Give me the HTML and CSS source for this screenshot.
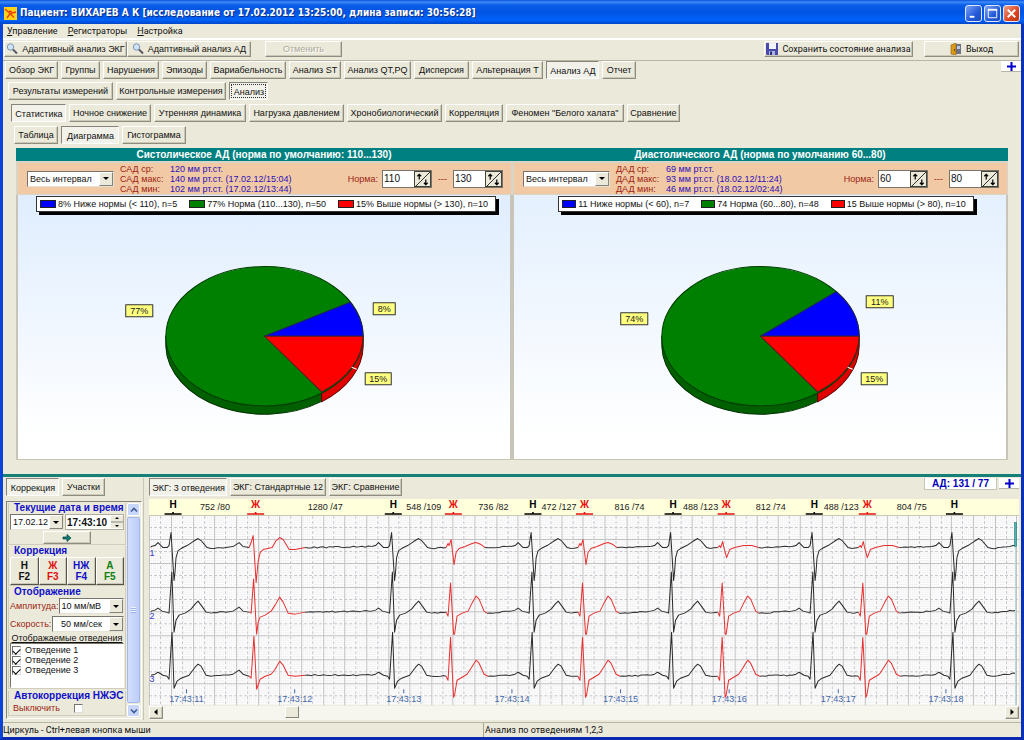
FILE: index.html
```html
<!DOCTYPE html>
<html lang="ru">
<head>
<meta charset="utf-8">
<title>Пациент: ВИХАРЕВ А К</title>
<link rel="stylesheet" href="styles.css">
</head>
<body>
<div class="window">
  <header class="titlebar">
    <svg class="app-icon" viewBox="0 0 13 13" aria-hidden="true"><rect width="13" height="13" fill="#ffd21a"/><path d="M1 2l5 4.500L12 5M6 6.500L3 11M6 6.500L10 10.500M5 4l3 1" stroke="#e8400c" stroke-width="1.400" fill="none"/></svg>
    <h1 class="title">Пациент: ВИХАРЕВ А К [исследование от 17.02.2012 13:25:00, длина записи: 30:56:28]</h1>
    <div class="window-buttons">
      <button class="wbtn" aria-label="Свернуть"><svg viewBox="0 0 16 16"><path d="M4 11.500h5" stroke="#fff" stroke-width="2"/></svg></button>
      <button class="wbtn" aria-label="Развернуть"><svg viewBox="0 0 16 16"><path d="M3.500 4v8.500h9V4" stroke="#fff" fill="none"/><path d="M3 4h10" stroke="#fff" stroke-width="2"/></svg></button>
      <button class="wbtn wbtn-close" aria-label="Закрыть"><svg viewBox="0 0 16 16"><path d="M4 4l8 8M12 4l-8 8" stroke="#fff" stroke-width="2"/></svg></button>
    </div>
  </header>

  <nav class="menubar">
    <a href="#"><u>У</u>правление</a>
    <a href="#"><u>Р</u>егистраторы</a>
    <a href="#"><u>Н</u>астройка</a>
  </nav>

  <div class="toolbar">
    <button class="btn tool-ecg"><svg class="icon" viewBox="0 0 12 12"><circle cx="4.500" cy="4" r="3.200" fill="#cfe4fa" stroke="#8095b5"/><path d="M7 6.500l4 4" stroke="#5d5a66" stroke-width="2"/></svg>Адаптивный анализ ЭКГ</button>
    <button class="btn tool-bp"><svg class="icon" viewBox="0 0 12 12"><circle cx="4.500" cy="4" r="3.200" fill="#cfe4fa" stroke="#8095b5"/><path d="M7 6.500l4 4" stroke="#5d5a66" stroke-width="2"/></svg>Адаптивный анализ АД</button>
    <button class="btn tool-undo" disabled>Отменить</button>
    <button class="btn tool-save ui-text"><svg class="icon" viewBox="0 0 12 12"><path d="M0 0h12v12H1L0 11z" fill="#4a4aa8"/><path d="M3 0h7v6H3z" fill="#f2f4fc"/><path d="M3 8h6v4H3z" fill="#a9b4dc"/><path d="M4 8.500h2V12H4z" fill="#32327c"/></svg>Сохранить состояние анализа</button>
    <button class="btn tool-exit ui-text"><svg class="icon" viewBox="0 0 12 12"><path d="M5 1h6v10H5z" fill="#6d7387"/><path d="M7 3h3v3H7z" fill="#b9cce8"/><path d="M1 2l5-2v12l-5-1z" fill="#dc9a18" stroke="#8c5f0c" stroke-width=".6"/><path d="M4 6h1v2H4z" fill="#704808"/></svg>Выход</button>
  </div>

  <main class="analysis">
    <div class="tab-line">
      <div class="tabs tabs-main">
        <button class="btn">Обзор ЭКГ</button><button class="btn">Группы</button><button class="btn">Нарушения</button><button class="btn">Эпизоды</button><button class="btn">Вариабельность</button><button class="btn">Анализ ST</button><button class="btn">Анализ QT,PQ</button><button class="btn">Дисперсия</button><button class="btn">Альтернация T</button><button class="btn active">Анализ АД</button><button class="btn">Отчет</button>
      </div>
      <button class="plus" aria-label="Добавить"><svg viewBox="0 0 9 9"><path d="M4.500 0v9M0 4.500h9" stroke="#0000c8" stroke-width="2"/></svg></button>
    </div>
    <div class="tabs tabs-measure">
      <button class="btn">Результаты измерений</button><button class="btn">Контрольные измерения</button><button class="btn active focused">Анализ</button>
    </div>
    <div class="tabs tabs-kind">
      <button class="btn active">Статистика</button><button class="btn">Ночное снижение</button><button class="btn">Утренняя динамика</button><button class="btn">Нагрузка давлением</button><button class="btn">Хронобиологический</button><button class="btn">Корреляция</button><button class="btn">Феномен "Белого халата"</button><button class="btn">Сравнение</button>
    </div>
    <div class="tabs tabs-view">
      <button class="btn">Таблица</button><button class="btn active">Диаграмма</button><button class="btn">Гистограмма</button>
    </div>

    <div class="panels">
      <section class="panel">
        <h2 class="panel-title">Систолическое АД (норма по умолчанию: 110...130)</h2>
        <div class="params">
          <span class="combo"><select aria-label="Интервал САД"><option>Весь интервал</option></select><i class="drop"></i></span>
          <dl class="stats">
            <dt>САД ср:</dt><dd>120 мм рт.ст.</dd>
            <dt>САД макс:</dt><dd>140 мм рт.ст. (17.02.12/15:04)</dd>
            <dt>САД мин:</dt><dd>102 мм рт.ст. (17.02.12/13:44)</dd>
          </dl>
          <div class="norm">
            <label for="sys-lo">Норма:</label>
            <span class="spin"><input id="sys-lo" value="110"><button aria-label="Изменить"><svg viewBox="0 0 16 16"><path d="M0 16L16 0" stroke="#222"/><path d="M4.500 2v6M2.500 4.500l2-2 2 2M11.500 8v6M9.500 11.500l2 2 2-2" stroke="#000" stroke-width="1.300" fill="none"/></svg></button></span>
            <span>---</span>
            <span class="spin"><input aria-label="Верхняя граница САД" value="130"><button aria-label="Изменить"><svg viewBox="0 0 16 16"><path d="M0 16L16 0" stroke="#222"/><path d="M4.500 2v6M2.500 4.500l2-2 2 2M11.500 8v6M9.500 11.500l2 2 2-2" stroke="#000" stroke-width="1.300" fill="none"/></svg></button></span>
          </div>
        </div>
        <div class="chart">
          <ul class="legend">
            <li><i class="key blue"></i>8% Ниже нормы (&lt; 110), n=5</li>
            <li><i class="key green"></i>77% Норма (110...130), n=50</li>
            <li><i class="key red"></i>15% Выше нормы (&gt; 130), n=10</li>
          </ul>
          <svg class="pie" viewBox="18 214 491 245">
            <path d="M165.500 336v10A98.500 69.500 0 0 0 321 401V391z" fill="#006000" stroke="#003000"/>
            <path d="M321 391v10.500A98.500 69.500 0 0 0 362.500 346V336z" fill="#e00000" stroke="#600000"/>
            <ellipse cx="264" cy="336" rx="98.500" ry="69.500" fill="#008000" stroke="#003c00"/>
            <path d="M264 336h98.500A98.500 69.500 0 0 0 349.500 302z" fill="#00f" stroke="#202060"/>
            <path d="M264 336h98.500A98.500 69.500 0 0 1 321 391.500z" fill="#f00" stroke="#502020"/>
            <path d="M351 367l5 2" stroke="#fff"/>
            <g class="marks"><path d="M125.500 304.500h27v12h-27zM372.500 302.500h22v12h-22zM364.500 372.500h26v12h-26z"/><text x="139" y="314">77%</text><text x="383.500" y="312">8%</text><text x="377.500" y="382">15%</text></g>
          </svg>
        </div>
      </section>

      <section class="panel">
        <h2 class="panel-title">Диастолического АД (норма по умолчанию 60...80)</h2>
        <div class="params">
          <span class="combo"><select aria-label="Интервал ДАД"><option>Весь интервал</option></select><i class="drop"></i></span>
          <dl class="stats">
            <dt>ДАД ср:</dt><dd>69 мм рт.ст.</dd>
            <dt>ДАД макс:</dt><dd>93 мм рт.ст. (18.02.12/11:24)</dd>
            <dt>ДАД мин:</dt><dd>46 мм рт.ст. (18.02.12/02:44)</dd>
          </dl>
          <div class="norm">
            <label for="dia-lo">Норма:</label>
            <span class="spin"><input id="dia-lo" value="60"><button aria-label="Изменить"><svg viewBox="0 0 16 16"><path d="M0 16L16 0" stroke="#222"/><path d="M4.500 2v6M2.500 4.500l2-2 2 2M11.500 8v6M9.500 11.500l2 2 2-2" stroke="#000" stroke-width="1.300" fill="none"/></svg></button></span>
            <span>---</span>
            <span class="spin"><input aria-label="Верхняя граница ДАД" value="80"><button aria-label="Изменить"><svg viewBox="0 0 16 16"><path d="M0 16L16 0" stroke="#222"/><path d="M4.500 2v6M2.500 4.500l2-2 2 2M11.500 8v6M9.500 11.500l2 2 2-2" stroke="#000" stroke-width="1.300" fill="none"/></svg></button></span>
          </div>
        </div>
        <div class="chart chart-dia">
          <ul class="legend">
            <li><i class="key blue"></i>11 Ниже нормы (&lt; 60), n=7</li>
            <li><i class="key green"></i>74 Норма (60...80), n=48</li>
            <li><i class="key red"></i>15 Выше нормы (&gt; 80), n=10</li>
          </ul>
          <svg class="pie" viewBox="514 214 491 245">
            <path d="M661.500 336v10A98.500 69.500 0 0 0 817 401V391z" fill="#006000" stroke="#003000"/>
            <path d="M817 391v10.500A98.500 69.500 0 0 0 858.500 346V336z" fill="#e00000" stroke="#600000"/>
            <ellipse cx="760" cy="336" rx="98.500" ry="69.500" fill="#008000" stroke="#003c00"/>
            <path d="M760 336h98.500A98.500 69.500 0 0 0 835.500 291.500z" fill="#00f" stroke="#202060"/>
            <path d="M760 336h98.500A98.500 69.500 0 0 1 817 391.500z" fill="#f00" stroke="#502020"/>
            <path d="M847 367l5 2" stroke="#fff"/>
            <g class="marks"><path d="M620.500 312.500h27v12h-27zM865.500 295.500h27v12h-27zM860.500 372.500h26v12h-26z"/><text x="634" y="322">74%</text><text x="879" y="305">11%</text><text x="873.500" y="382">15%</text></g>
          </svg>
        </div>
      </section>
    </div>
  </main>

  <div class="lower">
    <aside class="side">
      <div class="tabs tabs-side"><button class="btn active">Коррекция</button><button class="btn">Участки</button></div>
      <div class="side-box">
        <div class="side-scroll">
          <section class="group group-time">
            <h3>Текущие дата и время</h3>
            <div class="row">
              <span class="combo date"><input aria-label="Дата" value="17.02.12"><i class="drop"></i></span>
              <span class="time"><input aria-label="Время" value="17:43:10"><svg viewBox="0 0 12 12"><path d="M0 6h12" stroke="#888"/><path d="M6 1l2 2H4zM6 11l2-2H4z"/></svg></span>
            </div>
            <button class="btn go" aria-label="Перейти"><svg viewBox="0 0 10 8"><path d="M1 3h4V.500L9 4 5 7.500V5H1z" fill="#0a8078" stroke="#043c38" stroke-width=".7"/></svg></button>
          </section>
          <section class="group group-fix">
            <h3>Коррекция</h3>
            <div class="fix">
              <button class="btn">Н<br>F2</button><button class="btn c-red">Ж<br>F3</button><button class="btn c-blue">НЖ<br>F4</button><button class="btn c-green">А<br>F5</button>
            </div>
          </section>
          <section class="group group-view">
            <h3>Отображение</h3>
            <div class="field"><label for="amp">Амплитуда:</label><span class="combo amp"><select id="amp"><option>10 мм/мВ</option></select><i class="drop"></i></span></div>
            <div class="field"><label for="speed">Скорость:</label><span class="combo speed"><select id="speed"><option>50 мм/сек</option></select><i class="drop"></i></span></div>
            <p class="caption">Отображаемые отведения</p>
            <div class="leads">
              <label><input type="checkbox" checked>Отведение 1</label>
              <label><input type="checkbox" checked>Отведение 2</label>
              <label><input type="checkbox" checked>Отведение 3</label>
            </div>
          </section>
          <section class="group group-auto">
            <h3>Автокоррекция НЖЭС</h3>
            <label class="off">Выключить<input type="checkbox"></label>
          </section>
        </div>
        <div class="vscroll">
          <button aria-label="Вверх"><svg viewBox="0 0 8 8"><path d="M1 5.500l3-3 3 3" fill="none" stroke="#3c5a96" stroke-width="1.600"/></svg></button>
          <div class="vthumb"><i></i></div>
          <button aria-label="Вниз"><svg viewBox="0 0 8 8"><path d="M1 2.500l3 3 3-3" fill="none" stroke="#3c5a96" stroke-width="1.600"/></svg></button>
        </div>
      </div>
    </aside>

    <section class="ecg">
      <div class="tab-line">
        <div class="tabs tabs-ecg"><button class="btn active">ЭКГ: 3 отведения</button><button class="btn">ЭКГ: Стандартные 12</button><button class="btn">ЭКГ: Сравнение</button></div>
        <output class="bp">АД: 131 / 77</output>
        <button class="plus" aria-label="Добавить"><svg viewBox="0 0 9 9"><path d="M4.500 0v9M0 4.500h9" stroke="#0000c8" stroke-width="2"/></svg></button>
      </div>
      <svg class="strip" id="strip" viewBox="149 500 869 206"></svg>
      <div class="hscroll">
        <button class="btn" aria-label="Влево"><svg viewBox="0 0 8 8"><path d="M5.500 1v6L2 4z"/></svg></button>
        <div class="htrack"><i class="hthumb"></i></div>
        <button class="btn" aria-label="Вправо"><svg viewBox="0 0 8 8"><path d="M2.500 1v6L6 4z"/></svg></button>
      </div>
    </section>
  </div>

  <footer class="status">
    <span>Циркуль - Ctrl+левая кнопка мыши</span>
    <span>Анализ по отведениям 1,2,3</span>
  </footer>
</div>
<script src="ecg.js"></script>
</body>
</html>
```
FILE: styles.css
```css
* { box-sizing: border-box; }

body {
  margin: 0;
  font: 9px/10px "Liberation Sans", Arial, sans-serif;
  color: #111;
}

button, input, select { font: inherit; color: inherit; margin: 0; padding: 0; border-radius: 0; }
svg { display: block; }
h1, h2, h3, p, dl, dd, ul { margin: 0; padding: 0; }

.window {
  display: flex;
  flex-direction: column;
  min-height: 100vh;
  background: #ebe9da;
  border: solid #0a44d8;
  border-width: 0 3px 3px;
  border-right-color: #0831b8;
  border-bottom-color: #0a28b0;
}

/* Title bar */
.titlebar {
  display: flex;
  align-items: center;
  gap: 3px;
  height: 24px;
  margin: 0 -3px;
  padding: 2px 4px 0;
  background: linear-gradient(#0a50d8 0, #3c8cf8 2px, #0a5ce8 5px, #0054e3 12px, #0062fa 20px, #0046c8 100%);
}
.app-icon { width: 13px; height: 13px; }
.title {
  flex: 1;
  font: bold 10px/16px "DejaVu Sans Condensed", "DejaVu Sans", sans-serif;
  color: #fff;
  text-shadow: 1px 1px 0 #0a2c80;
}
.window-buttons { display: flex; gap: 2px; }
.wbtn {
  width: 17px;
  height: 17px;
  border: 1px solid #dfe8fa;
  border-radius: 3px;
  background: linear-gradient(135deg, #7ba4f4, #2258d8 60%, #1c4cc0);
}
.wbtn-close { background: linear-gradient(135deg, #f0a088, #dc4420 60%, #c03810); }

/* Menu and toolbar */
.menubar {
  display: flex;
  gap: 10px;
  height: 15px;
  padding: 2px 4px 0;
  font-family: Roboto, sans-serif;
  border-bottom: 1px solid #fff;
}
.menubar a { color: #111; text-decoration: none; }
.ui-text { font-family: Roboto, sans-serif; }
.toolbar {
  display: flex;
  height: 22px;
  padding: 1px 0 3px 1px;
  border-top: 1px solid #fff;
  border-bottom: 1px solid #b8b5a4;
}
.btn {
  display: flex;
  align-items: center;
  justify-content: center;
  white-space: nowrap;
  background: #ebe9da;
  border: 1px solid;
  border-color: #fff #8f8d80 #8f8d80 #fff;
  box-shadow: inset -1px -1px 0 #cbc8b8;
}
.btn:disabled { color: #aca899; text-shadow: 1px 1px 0 #fff; }
.btn.active {
  background: #f3f2ea;
  border-color: #86847a #fff #fff #86847a;
  box-shadow: none;
  padding: 1px 0 0 1px;
}
.btn.focused { outline: 1px dotted #333; outline-offset: -3px; }
.icon { width: 12px; height: 12px; margin-right: 4px; }
.tool-ecg { width: 123px; }
.tool-bp { width: 124px; }
.tool-undo { width: 77px; margin-left: 14px; }
.tool-save { width: 149px; margin-left: auto; }
.tool-exit { width: 95px; margin: 0 2px 0 11px; }

/* Tabs */
.tab-line { display: flex; align-items: flex-start; }
.tabs { display: grid; gap: 3px; grid-auto-rows: 18px; }
.analysis { padding-bottom: 14px; }
.tabs-main { grid-template-columns: 53px 39px 56px 45px 76px 52px 67px 55px 71px 53px 34px; margin-left: 2px; }
.tabs-measure { grid-template-columns: 105px 110px 39px; margin: 3px 0 0 5px; }
.tabs-kind { grid-template-columns: 55px 82px 92px 95px 95px 58px 118px 53px; margin: 4px 0 0 8px; }
.tabs-view { grid-template-columns: 44px 58px 64px; margin: 4px 0 0 11px; }
.plus {
  display: grid;
  place-items: center;
  width: 20px;
  height: 11px;
  margin-left: auto;
  background: #fff;
  border: 0;
  border-bottom: 1px solid #b8b5a4;
}
.plus svg { width: 9px; height: 9px; }

/* Pressure panels */
.panels {
  display: grid;
  grid-template-columns: 1fr 1fr;
  margin: 4px 13px 0;
  background: #008080;
}
.panel { display: flex; flex-direction: column; min-width: 0; }
.panel-title {
  font-size: 10px;
  line-height: 13px;
  text-align: center;
  color: #fff;
}
.params {
  display: flex;
  align-items: center;
  height: 34px;
  padding: 0 8px 0 9px;
  background: #f2c9a5;
  border: 1px solid #d8d5c8;
  border-width: 2px 1px 1px 2px;
}
.combo {
  display: grid;
  grid-template-columns: 1fr 14px;
  height: 16px;
  background: #fff;
  border: 1px solid;
  border-color: #77756a #e6e3d4 #e6e3d4 #77756a;
}
.combo select, .combo input {
  grid-area: 1 / 1 / 2 / 3;
  min-width: 0;
  width: 100%;
  padding-left: 2px;
  appearance: none;
  background: none;
  border: 0;
}
.drop {
  grid-area: 1 / 2;
  display: grid;
  place-items: center;
  pointer-events: none;
  background: #ebe9da;
  border: 1px solid;
  border-color: #fff #86847a #86847a #fff;
}
.drop::after {
  content: "";
  border: solid transparent;
  border-width: 3px 3px 0;
  border-top-color: #000;
}
.params .combo { width: 87px; }
.stats {
  display: grid;
  grid-template-columns: 50px auto;
  line-height: 10px;
  margin-left: 6px;
  white-space: nowrap;
}
.stats dt { color: #9c2410; }
.stats dd { color: #2a10b8; }
.norm { display: flex; align-items: center; gap: 4px; margin-left: auto; color: #9c2410; }
.norm > span:not(.spin) { width: 13px; text-align: center; }
.spin { display: flex; height: 18px; width: 50px; background: #fff; border: 1px solid #77756a; color: #111; }
.spin input { flex: 1; width: 10px; border: 0; background: none; font-size: 10px; padding-left: 1px; }
.spin button { width: 17px; background: #ebe9da; border: 1px solid #44423a; }
.chart {
  display: flex;
  flex-direction: column;
  align-items: center;
  gap: 2px;
  padding-top: 1px;
  background: linear-gradient(#dfedfe, #fff 92%);
  border: 1px solid #c8c5b8;
  border-width: 0 2px 1px 2px;
}
.chart-dia { background: linear-gradient(#e4f0fe, #fff 92%); }
.legend {
  display: flex;
  gap: 12px;
  list-style: none;
  padding: 1px 7px 1px 3px;
  margin-left: 4px;
  background: #fff;
  border: 1px solid #333;
  box-shadow: 3px 3px 0 #000;
  white-space: nowrap;
}
.chart-dia .legend { margin-left: 12px; }
.legend li { display: flex; align-items: center; gap: 2px; line-height: 12px; }
.key { width: 16px; height: 8px; border: 1px solid #222; }
.chart-dia .key { width: 14px; }
.blue { background: #00f; }
.green { background: #008000; }
.red { background: #f00; }
.pie { width: 100%; height: auto; stroke-linejoin: round; }
.marks path { fill: #ffff80; stroke: #333; }
.marks text { font-size: 9px; text-anchor: middle; fill: #222; }

/* Lower half */
.lower {
  flex: 1;
  display: grid;
  grid-template-columns: 141px 1fr;
  gap: 4px;
  padding: 1px 2px 2px 0;
  border-top: 3px solid #148078;
}
.side { display: flex; flex-direction: column; min-width: 0; padding: 0 0 0 2px; border-right: 1px solid #c8c5b4; }
.tabs-side { grid-template-columns: 53px 43px; margin-left: 1px; }
.side-box {
  flex: 1;
  display: grid;
  grid-template-columns: 1fr 13px;
  gap: 1px;
  margin: 5px 1px 1px;
  padding: 1px;
  border: 1px solid;
  border-color: #86847a #fff #fff #86847a;
}
.side-scroll { display: flex; flex-direction: column; gap: 1px; min-width: 0; }
.group { border: 1px solid #d0cdbc; border-top: 0; padding: 0 1px; }
.group h3 {
  display: flex;
  font-size: 10px;
  line-height: 10px;
  color: #1010c8;
  white-space: nowrap;
}
.group h3::before { content: ""; width: 4px; }
.group-time h3, .group-fix h3 { padding-bottom: 1px; }
.row { display: flex; justify-content: space-between; }
.date { width: 54px; }
.time { display: flex; align-items: center; width: 59px; height: 16px; background: #fff; border: 1px solid #b0ad9c; }
.time input { flex: 1; width: 10px; border: 0; padding-left: 1px; background: none; font-weight: bold; font-size: 10px; }
.time svg { width: 12px; height: 12px; background: #ebe9da; }
.go { width: 48px; height: 13px; margin: 1px auto 0; }
.go svg { width: 10px; height: 8px; }
.fix { display: grid; grid-template-columns: repeat(4, 1fr); height: 28px; }
.fix .btn { font-weight: bold; font-size: 10px; line-height: 11px; border-color: #fff #55534a #55534a #fff; }
.c-red { color: #e01010; }
.c-blue { color: #1010c8; }
.c-green { color: #108010; }
.field { display: flex; align-items: center; justify-content: space-between; height: 18px; color: #9c2410; white-space: nowrap; }
.field .combo { color: #111; }
.amp { width: 66px; }
.speed { width: 72px; }
.speed select { padding-left: 8px; }
.caption { text-decoration: underline; text-align: center; line-height: 10px; white-space: nowrap; }
.leads {
  display: flex;
  flex-direction: column;
  height: 45px;
  padding: 1px;
  background: #fff;
  border: 1px solid;
  border-color: #77756a #fff #fff #77756a;
}
.leads label { display: flex; align-items: center; gap: 4px; height: 10px; }
input[type="checkbox"] {
  appearance: none;
  display: grid;
  place-items: center;
  width: 9px;
  height: 9px;
  background: #fff;
  border: 1px solid;
  border-color: #77756a #ddd #ddd #77756a;
}
input[type="checkbox"]:checked::after {
  content: "";
  width: 6px;
  height: 4px;
  border: solid #000;
  border-width: 0 0 1px 1px;
  rotate: -45deg;
}
.group-auto { margin-top: 1px; }
.off { display: flex; align-items: center; gap: 14px; padding-left: 3px; height: 14px; color: #9c2410; }
.vscroll { display: flex; flex-direction: column; gap: 1px; }
.vscroll button {
  display: grid;
  place-items: center;
  height: 13px;
  background: #c8d6fa;
  border: 1px solid #fff;
  border-radius: 2px;
}
.vscroll svg { width: 8px; height: 8px; }
.vthumb {
  flex: 1;
  display: grid;
  place-items: center;
  background: linear-gradient(90deg, #d2defe, #bccdf8);
  border: 1px solid #a4b8ea;
  border-radius: 2px;
}
.vthumb i { width: 5px; height: 6px; background: repeating-linear-gradient(#eef3ff 0 1px, #9eb4e8 1px 2px); }

/* ECG */
.ecg { min-width: 0; padding-left: 1px; }
.tabs-ecg { grid-template-columns: 78px 96px 73px; }
.bp {
  width: 73px;
  margin-left: auto;
  text-align: center;
  font-weight: bold;
  font-size: 10px;
  line-height: 11px;
  color: #0000b8;
  background: #fff;
  border: 1px solid #c8c5b4;
  border-top: 0;
}
.bp + .plus { margin-left: 2px; }
.strip { width: 100%; height: auto; margin-top: 3px; }
.strip text { font-size: 9px; text-anchor: middle; fill: #222; }
.strip .beat { font-size: 10px; font-weight: bold; }
.strip .time-mark { fill: #4468a8; }
.strip .lead-no { fill: #3838c8; }
.strip path { fill: none; }
.hscroll { display: flex; height: 14px; background: #f6f5ee; }
.hscroll .btn { width: 14px; height: 13px; }
.hscroll svg { width: 8px; height: 8px; }
.htrack { flex: 1; padding-left: 14%; }
.hthumb {
  display: block;
  width: 14px;
  height: 12px;
  background: #ebe9da;
  border: 1px solid;
  border-color: #fff #86847a #86847a #fff;
}

.status {
  display: grid;
  grid-template-columns: 479px 1fr;
  gap: 1px;
  height: 15px;
  border-top: 1px solid #b8b5a4;
  font-family: Roboto, sans-serif;
  line-height: 14px;
}
.status span + span { border-left: 1px solid #a8a594; padding-left: 1px; }
```
FILE: ecg.js
```js
const svg = document.getElementById('strip');
const out = [];
const line = (d, stroke, extra = '') => out.push(`<path d="${d}" stroke="${stroke}" ${extra}/>`);
const text = (x, y, s, cls = '', fill = '') =>
  out.push(`<text x="${x}" y="${y}" class="${cls}" ${fill ? `style="fill:${fill}"` : ''}>${s}</text>`);

// Paper
out.push('<rect x="149" y="500" width="869" height="17" fill="#ffffdc"/>');
out.push('<rect x="149" y="517" width="869" height="189" fill="#fefefe"/>');
let fine = '', dash = '', solid = '';
for (let i = -10; i * 2.165 + 171 < 1018; i++) {
  const x = (171 + i * 2.165).toFixed(1);
  if (i % 10 === 0) solid += `M${Math.round(x) + 0.5} 517V706`;
  else if (i % 5 === 0) dash += `M${Math.round(x) + 0.5} 517V706`;
  else fine += `M${x} 517V706`;
}
for (let i = -9; i * 2.4 + 540 < 706; i++) {
  const y = (540 + i * 2.4).toFixed(1);
  if (i % 10 === 0) solid += `M149 ${Math.round(y) + 0.5}H1018`;
  else if (i % 5 === 0) dash += `M149 ${Math.round(y) + 0.5}H1018`;
  else fine += `M149 ${y}H1018`;
}
line(fine, '#e6e6e6', 'stroke-width=".6" stroke-dasharray="1 1"');
line(dash, '#c8c8d0', 'stroke-dasharray="3 2"');
line(solid, '#c2c2c2');
line('M149 516.500H1018', '#c8c8b8');

// Beats: type, marker x, spike x
const beats = [
  ['H', 173, 171], ['A', 255.5, 253], ['H', 393, 391.3], ['B', 453, 449.7], ['H', 532.5, 530.7],
  ['B', 584, 581.5], ['H', 672.5, 670], ['C', 725.5, 721], ['H', 813.5, 811.3], ['D', 866.5, 861.5], ['H', 953.5, 951],
];
const intervals = [[215, '752 /80'], [325, '1280 /47'], [423.5, '548 /109'], [493, '736 /82'], [558.5, '472 /127'],
  [629, '816 /74'], [700, '488 /123'], [770, '812 /74'], [840.5, '488 /123'], [911, '804 /75']];

// Offsets from the spike, [dx, dy] from the lead's baseline
const base = [548.5, 613, 676];
const normal = [
  [[-20, -1], [-16, -2], [-13, -5], [-10, -2], [-8, 0], [-4, 0], [-2, -2], [0, -15], [3, 33], [4, 24], [5, 10], [7, 3], [10, 1], [16, -2], [22, -6], [27, -9], [30, -7], [36, 0], [40, 1]],
  [[-20, -1], [-16, -2], [-13, -4], [-9, -1], [-5, 0], [-2, 1], [0.8, -40], [3, 20], [5, 8], [8, 3], [14, 1], [20, -3], [24, -8], [27, -11], [30, -7], [35, 0], [40, 1]],
  [[-20, 0], [-16, -1], [-13, -3], [-8, 0], [-4, 1], [-2, 4], [1, -43], [3, 13], [6, 6], [10, 3], [18, 0], [24, -8], [27, -11], [30, -9], [35, 0], [40, 1]],
];
const wide = [
  [[-4, 0], [-2, -5], [0, -12], [3, 35], [5, 14], [7, 5], [10, 2], [19, 0], [23, -7], [26.5, -10], [30, -8], [36, 2], [42, 2], [52, 0]],
  [[-4, 0], [-2, 1], [0.5, -33], [3.5, 22], [5, 10], [7, 5], [12, 3], [18, -1], [22, -7], [26.5, -15], [30, -10], [35, 1], [42, 2], [52, 0]],
  [[-4, 1], [-2, 3], [0.8, -39], [3.5, 14], [7, 4], [12, 1], [18, -1], [22, -6], [26.5, -14], [30, -10], [35, 0], [42, 1], [52, 0]],
];
const late = [
  [[-4, 0], [-2, -4], [-1, -2], [1, -8], [4, 17], [6, 5], [9, 1], [15, -1], [22, -4], [26, -5], [31, -3], [35, 0]],
  [[-4, 0], [-2, 4], [0.5, -29], [3.5, 22], [4.5, 22], [7, 4], [12, 1], [18, -1], [22, -9], [26, -16], [29, -13], [34, -1], [37, 1]],
  [[-4, 1], [-2, 5], [0.5, -38], [3.5, 22], [4.5, 20], [7, 5], [12, 2], [17, -1], [21, -7], [26, -15], [29, -12], [34, -1], [38, 1]],
];
const flat = [[-4, 0], [-2, -2], [-1, 0], [1, -6], [2, -1], [5, 10], [8, 2], [13, 0], [22, -2], [30, -2], [37, 0]];
const shape = (type, lead) => {
  if (type === 'H') return normal[lead];
  if (type === 'A') return wide[lead];
  if (type !== 'B' && lead === 0) return flat;
  return late[lead];
};

let seed = 7;
const jitter = () => { seed = (seed * 1103515245 + 12345) % 2147483648; return (seed / 2147483648 - 0.5) * 1.3; };
for (let lead = 0; lead < 3; lead++) {
  let last = [151, base[lead]];
  const walk = to => {
    let d = `M${last[0]} ${last[1]}`;
    for (let x = last[0] + 3; x < to[0] - 2; x += 3) {
      const k = (x - last[0]) / (to[0] - last[0]);
      d += `L${x.toFixed(1)} ${(last[1] + (to[1] - last[1]) * k + jitter()).toFixed(1)}`;
    }
    return d + `L${to[0]} ${to[1]}`;
  };
  beats.forEach(([type, , spike]) => {
    let points = shape(type, lead).map(([dx, dy]) => [spike + dx, base[lead] + dy]);
    if (type === 'A') points = [[spike - 20, base[lead] - 1], [spike - 14, base[lead] - 5], [spike - 10, base[lead] - 1], ...points];
    line(walk(points[0]), '#333');
    const cut = type === 'A' ? 3 : 0;
    if (cut) line('M' + points.slice(0, cut + 1).map(p => p.join(' ')).join('L'), '#333');
    line('M' + points.slice(cut).map(p => p.join(' ')).join('L'), type === 'H' ? '#2a2a2a' : '#e83030',
      'stroke-linejoin="round"');
    last = points[points.length - 1];
  });
  line(walk([1015, base[lead] - 2]), '#333');
  text(152, [557, 620, 683][lead], lead + 1, 'lead-no');
}

// Markers and labels
beats.forEach(([type, x]) => {
  const color = type === 'H' ? '#000' : '#e81010';
  text(x, 509, type === 'H' ? 'Н' : 'Ж', 'beat', color);
  line(`M${x - 8.5} 515H${x + 8.5}M${x} 513V515`, color, 'stroke-width="1.600"');
});
intervals.forEach(([x, s]) => text(x, 511, s));
[186.5, 294.5, 403.5, 511.5, 620, 728.5, 837.5, 945].forEach((x, i) => {
  line(`M${x} 690V694`, '#4468a8');
  text(x, 703, `17:43:${11 + i}`, 'time-mark');
});
line('M1014.500 548V706', '#b8dcdc');
out.push('<rect x="1013.500" y="523.500" width="2" height="24" fill="#58b0b0" stroke="#108080" stroke-width=".6"/>');
svg.innerHTML = out.join('');
```
